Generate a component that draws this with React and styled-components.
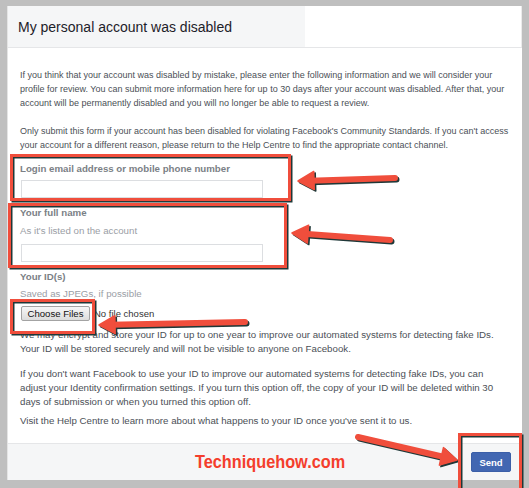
import React from 'react';
import styled, { createGlobalStyle } from 'styled-components';

const GlobalStyle = createGlobalStyle`
  html, body {
    margin: 0;
    padding: 0;
    background: #bfbfbf;
  }
  body {
    font-family: "Liberation Sans", Arial, sans-serif;
  }
`;

const Page = styled.div`
  position: relative;
  width: 529px;
  height: 488px;
  padding: 6px 7px 8px 7px;
  box-sizing: border-box;
  overflow: hidden;
`;

const Card = styled.div`
  display: flex;
  flex-direction: column;
  height: 474px;
  background: #fff;
  border-left: 1px solid #e4e4e4;
  box-sizing: border-box;
`;

const Header = styled.div`
  display: flex;
  height: 42px;
  border-bottom: 1px solid #e5e6e8;
  box-sizing: border-box;
`;

const TitleBox = styled.div`
  display: flex;
  align-items: center;
  width: 297px;
  padding-left: 10px;
  background: #f5f6f7;
  box-sizing: border-box;
`;

const HeaderRest = styled.div`
  flex: 1;
  border-right: 1px solid #ebebeb;
`;

const Title = styled.h2`
  margin: 0;
  font-size: 14px;
  font-weight: normal;
  color: #1d2129;
`;

const Body = styled.div`
  flex: 1;
  padding: 20px 11px 0 12px;
`;

const Text = styled.p`
  margin: ${p => p.$mt || 0}px 0 0 0;
  font-size: ${p => p.$size || 9}px;
  line-height: 14px;
  color: #4b4f56;
  white-space: nowrap;
`;

const Field = styled.div`
  display: flex;
  flex-direction: column;
  align-items: flex-start;
  margin-top: ${p => p.$mt || 0}px;
`;

const Label = styled.label`
  font-size: 9.7px;
  font-weight: bold;
  line-height: 14px;
  color: #7b7f86;
`;

const Hint = styled.div`
  margin-top: ${p => p.$mt || 0}px;
  font-size: 9.7px;
  line-height: 14px;
  color: #9a9ea5;
`;

const Input = styled.input`
  width: 242px;
  height: 18px;
  margin: ${p => p.$mt || 0}px 0 0 1px;
  padding: 0 4px;
  border: 1px solid #dcdee1;
  background: #fff;
  box-sizing: border-box;
  outline: none;
`;

const FileRow = styled.div`
  display: flex;
  align-items: center;
  gap: 4px;
  margin: 5px 0 0 1px;
`;

const FileButton = styled.button`
  width: 69px;
  height: 15px;
  padding: 0;
  border: 1px solid #a3a3a3;
  border-radius: 2px;
  background: linear-gradient(#f7f7f7, #dcdcdc);
  font-family: "Liberation Sans", Arial, sans-serif;
  font-size: 9.6px;
  color: #111;
`;

const FileStatus = styled.span`
  font-size: 9.5px;
  color: #333;
`;

const Footer = styled.div`
  position: relative;
  display: flex;
  align-items: center;
  justify-content: flex-end;
  height: 37px;
  padding-right: 11px;
  border-top: 1px solid #e5e6e8;
  background: #f5f6f7;
  box-sizing: border-box;
`;

const SendButton = styled.button`
  width: 40px;
  height: 20px;
  padding: 0;
  border: 1px solid #3b5fa8;
  border-radius: 2px;
  background: #4267b2;
  font-family: "Liberation Sans", Arial, sans-serif;
  font-size: 9.5px;
  font-weight: bold;
  color: #fff;
`;

const Watermark = styled.span`
  position: absolute;
  left: 187px;
  top: 50%;
  transform: translateY(-50%) scaleX(0.88);
  transform-origin: left center;
  font-family: "Liberation Sans", Arial, sans-serif;
  font-size: 18.5px;
  font-weight: bold;
  color: #f43e2c;
`;

const Overlay = styled.svg`
  position: absolute;
  left: 0;
  top: 0;
  pointer-events: none;
`;

const RED = '#f04e3c';
const SHADOW = '#1f3838';

const boxes = [
  { x: 11.5, y: 155.5, w: 278, h: 44 },
  { x: 9.5, y: 204.5, w: 276, h: 62 },
  { x: 11.5, y: 300.5, w: 82, h: 32 },
  { x: 459.5, y: 434.5, w: 61, h: 60 },
];

const arrows = [
  { x1: 395, y1: 178, x2: 298, y2: 181 },
  { x1: 390, y1: 240, x2: 292, y2: 233 },
  { x1: 245, y1: 322, x2: 99, y2: 325 },
  { x1: 358, y1: 437, x2: 457, y2: 460 },
];

const headPoints = ({ x1, y1, x2, y2 }, off = 0) => {
  const dx = x2 - x1;
  const dy = y2 - y1;
  const len = Math.hypot(dx, dy);
  const ux = dx / len;
  const uy = dy / len;
  const bx = x2 - ux * 16;
  const by = y2 - uy * 16;
  const pts = [
    [x2, y2],
    [bx - uy * 9, by + ux * 9],
    [bx + uy * 9, by - ux * 9],
  ];
  return pts.map(([px, py]) => `${px + off},${py + off}`).join(' ');
};

const Arrow = ({ a, color, off }) => {
  const len = Math.hypot(a.x2 - a.x1, a.y2 - a.y1);
  const ex = a.x2 - ((a.x2 - a.x1) / len) * 12;
  const ey = a.y2 - ((a.y2 - a.y1) / len) * 12;
  return (
    <g>
      <line
        x1={a.x1 + off}
        y1={a.y1 + off}
        x2={ex + off}
        y2={ey + off}
        stroke={color}
        strokeWidth="6"
        strokeLinecap="round"
      />
      <polygon points={headPoints(a, off)} fill={color} strokeLinejoin="round" stroke={color} strokeWidth="1.5" />
    </g>
  );
};

const Annotations = () => (
  <Overlay width="529" height="488" viewBox="0 0 529 488">
    {[SHADOW, RED].map((c, i) => {
      const off = i === 0 ? 1.5 : 0;
      return (
        <g key={c}>
          {boxes.map((b, j) => (
            <rect key={j} x={b.x + off} y={b.y + off} width={b.w} height={b.h} fill="none" stroke={c} strokeWidth="3" />
          ))}
          {arrows.map((a, j) => (
            <Arrow key={j} a={a} color={c} off={off} />
          ))}
        </g>
      );
    })}
  </Overlay>
);

export default function App() {
  return (
    <Page>
      <GlobalStyle />
      <Card>
        <Header>
          <TitleBox>
            <Title>My personal account was disabled</Title>
          </TitleBox>
          <HeaderRest />
        </Header>
        <Body>
          <Text>
            If you think that your account was disabled by mistake, please enter the following information and we will consider your
            <br />
            profile for review. You can submit more information here for up to 30 days after your account was disabled. After that, your
            <br />
            account will be permanently disabled and you will no longer be able to request a review.
          </Text>
          <Text $mt={14}>
            Only submit this form if your account has been disabled for violating Facebook's Community Standards. If you can't access
            <br />
            your account for a different reason, please return to the Help Centre to find the appropriate contact channel.
          </Text>

          <Field $mt={10}>
            <Label>Login email address or mobile phone number</Label>
            <Input $mt={4} />
          </Field>

          <Field $mt={8}>
            <Label>Your full name</Label>
            <Hint $mt={4}>As it's listed on the account</Hint>
            <Input $mt={6} />
          </Field>

          <Field $mt={8}>
            <Label>Your ID(s)</Label>
            <Hint $mt={3}>Saved as JPEGs, if possible</Hint>
            <FileRow>
              <FileButton>Choose Files</FileButton>
              <FileStatus>No file chosen</FileStatus>
            </FileRow>
          </Field>

          <Text $size={9.7} $mt={7}>
            We may encrypt and store your ID for up to one year to improve our automated systems for detecting fake IDs.
            <br />
            Your ID will be stored securely and will not be visible to anyone on Facebook.
          </Text>
          <Text $size={9.7} $mt={11}>
            If you don't want Facebook to use your ID to improve our automated systems for detecting fake IDs, you can
            <br />
            adjust your Identity confirmation settings. If you turn this option off, the copy of your ID will be deleted within 30
            <br />
            days of submission or when you turned this option off.
          </Text>
          <Text $size={9.7} $mt={5}>
            Visit the Help Centre to learn more about what happens to your ID once you've sent it to us.
          </Text>
        </Body>
        <Footer>
          <Watermark>Techniquehow.com</Watermark>
          <SendButton>Send</SendButton>
        </Footer>
      </Card>
      <Annotations />
    </Page>
  );
}
